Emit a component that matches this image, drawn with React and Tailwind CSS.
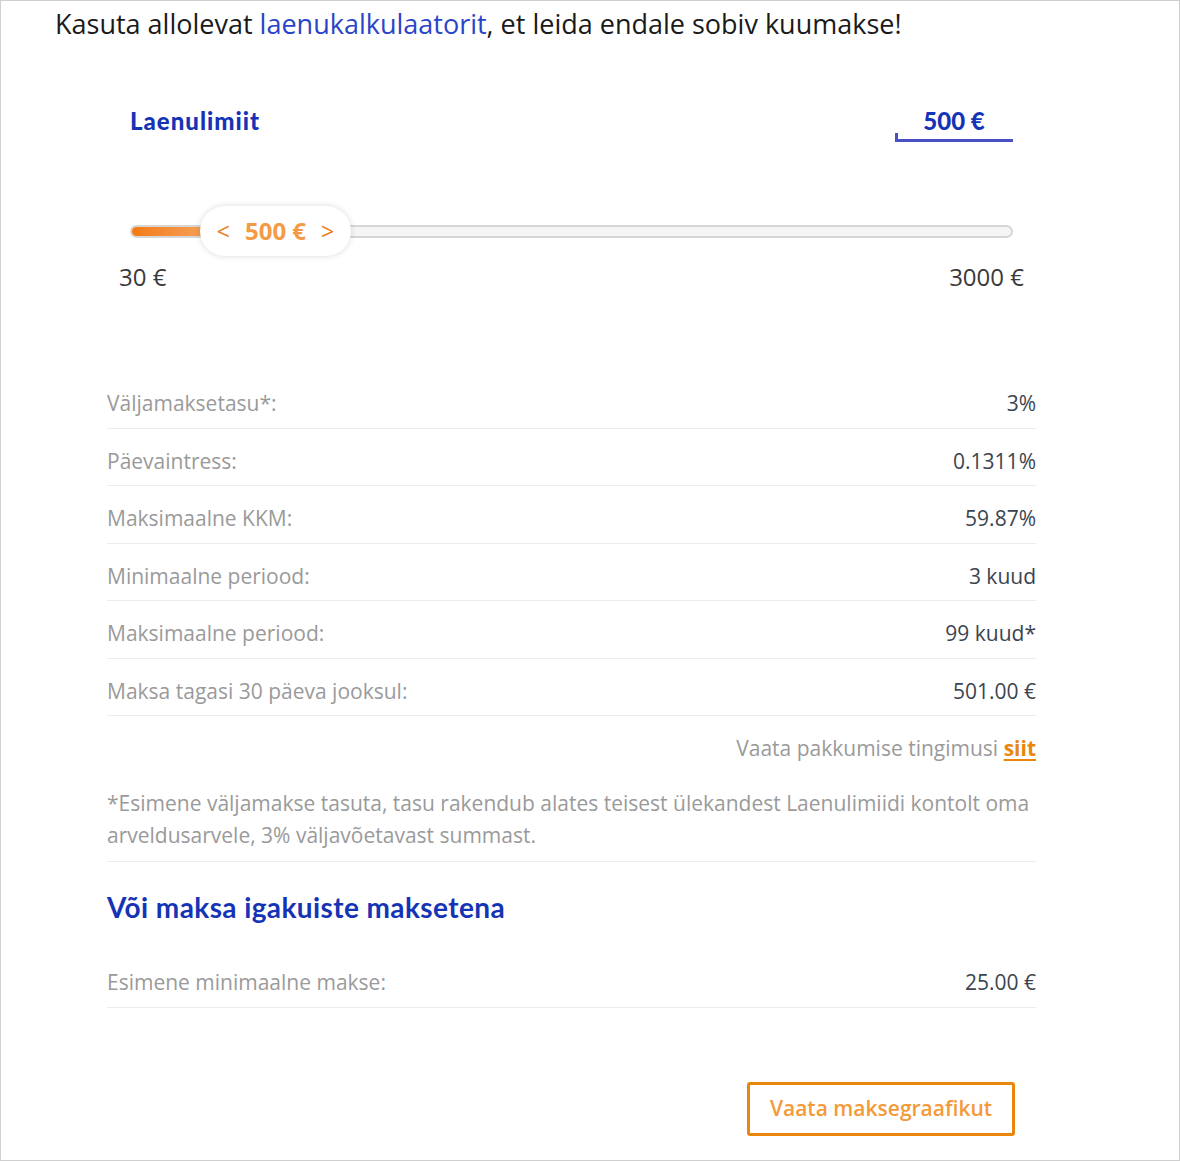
export default function App() {
  const rows = [
    ["Väljamaksetasu*:", "3%"],
    ["Päevaintress:", "0.1311%"],
    ["Maksimaalne KKM:", "59.87%"],
    ["Minimaalne periood:", "3 kuud"],
    ["Maksimaalne periood:", "99 kuud*"],
    ["Maksa tagasi 30 päeva jooksul:", "501.00 €"],
  ];

  return (
    <div className="w-[1180px] h-[1161px] border border-[#cfcfcf] bg-white font-['Open_Sans',sans-serif] overflow-hidden">
      {/* Intro */}
      <p className="pl-[54px] pt-[5px] text-[27px] leading-[36px] text-[#1a1a1a]">
        Kasuta allolevat <span className="text-[#2b44c7]">laenukalkulaatorit</span>, et leida endale sobiv kuumakse!
      </p>

      {/* Slider block */}
      <div className="ml-[118px] mr-[155px] mt-[64px]">
        <div className="flex items-start justify-between pl-[11px] pr-[11px]">
          <h2 className="font-['Lato',sans-serif] font-black text-[24px] leading-[30px] text-[#1534b5] tracking-[1px]">
            Laenulimiit
          </h2>
          <div className="relative w-[118px] h-[36px] text-center">
            <span className="font-['Lato',sans-serif] font-black text-[24px] leading-[30px] text-[#1534b5]">500 €</span>
            <div className="absolute left-0 bottom-0 w-full h-[3px] bg-[#4a4fc4]" />
            <div className="absolute left-0 bottom-0 w-[3px] h-[9px] bg-[#4a4fc4]" />
          </div>
        </div>

        <div className="relative mt-[64px] ml-[11px] mr-[11px] h-[50px] flex items-center">
          <div className="w-full h-[13px] rounded-full border-2 border-[#d6d6d6] bg-[#f5f5f5] overflow-hidden">
            <div className="h-full w-[80px] bg-gradient-to-r from-[#f47a0c] to-[#f4a35a]" />
          </div>
          <div className="absolute left-[70px] top-0 h-[50px] w-[151px] rounded-full bg-white shadow-[0_0_6px_rgba(0,0,0,0.15)] flex items-center justify-center gap-[15px]">
            <span className="text-[23px] leading-none text-[#f07d1c]">&lt;</span>
            <span className="text-[24px] font-bold leading-none text-[#f39a45]">500 €</span>
            <span className="text-[23px] leading-none text-[#f07d1c]">&gt;</span>
          </div>
        </div>

        <div className="flex justify-between mt-[5px] text-[24px] leading-[32px] text-[#3a3a3a]">
          <span>30 €</span>
          <span>3000 €</span>
        </div>
      </div>

      {/* Details */}
      <div className="ml-[106px] mr-[143px] mt-[78px] text-[21px]">
        {rows.map(([label, value]) => (
          <div key={label} className="flex justify-between items-start h-[57.5px] pt-[17px] leading-[30px] border-b border-[#ececec]">
            <span className="text-[#9a9a9a]">{label}</span>
            <span className="text-[#3b4550] font-medium">{value}</span>
          </div>
        ))}

        <div className="text-right text-[#9a9a9a] mt-[17px] leading-[30px]">
          Vaata pakkumise tingimusi{" "}
          <a className="text-[#e8870c] font-bold underline underline-offset-[3px]">siit</a>
        </div>

        <p className="mt-[24px] text-[#9a9a9a] leading-[32px] pb-[10px] border-b border-[#ececec]">
          *Esimene väljamakse tasuta, tasu rakendub alates teisest ülekandest Laenulimiidi kontolt oma arveldusarvele, 3% väljavõetavast summast.
        </p>

        <h3 className="mt-[27px] font-['Lato',sans-serif] font-bold text-[28px] leading-[36px] text-[#1534b5] tracking-[0.4px]">
          Või maksa igakuiste maksetena
        </h3>

        <div className="mt-[25px] flex justify-between items-start h-[57.5px] pt-[17px] leading-[30px] border-b border-[#ececec]">
          <span className="text-[#9a9a9a]">Esimene minimaalne makse:</span>
          <span className="text-[#3b4550] font-medium">25.00 €</span>
        </div>

        <div className="flex justify-end mt-[74px] mr-[21px]">
          <button className="h-[54px] w-[268px] border-[3px] border-[#e8870c] rounded-[3px] text-[21px] font-semibold text-[#f39a3a]">
            Vaata maksegraafikut
          </button>
        </div>
      </div>
    </div>
  );
}
